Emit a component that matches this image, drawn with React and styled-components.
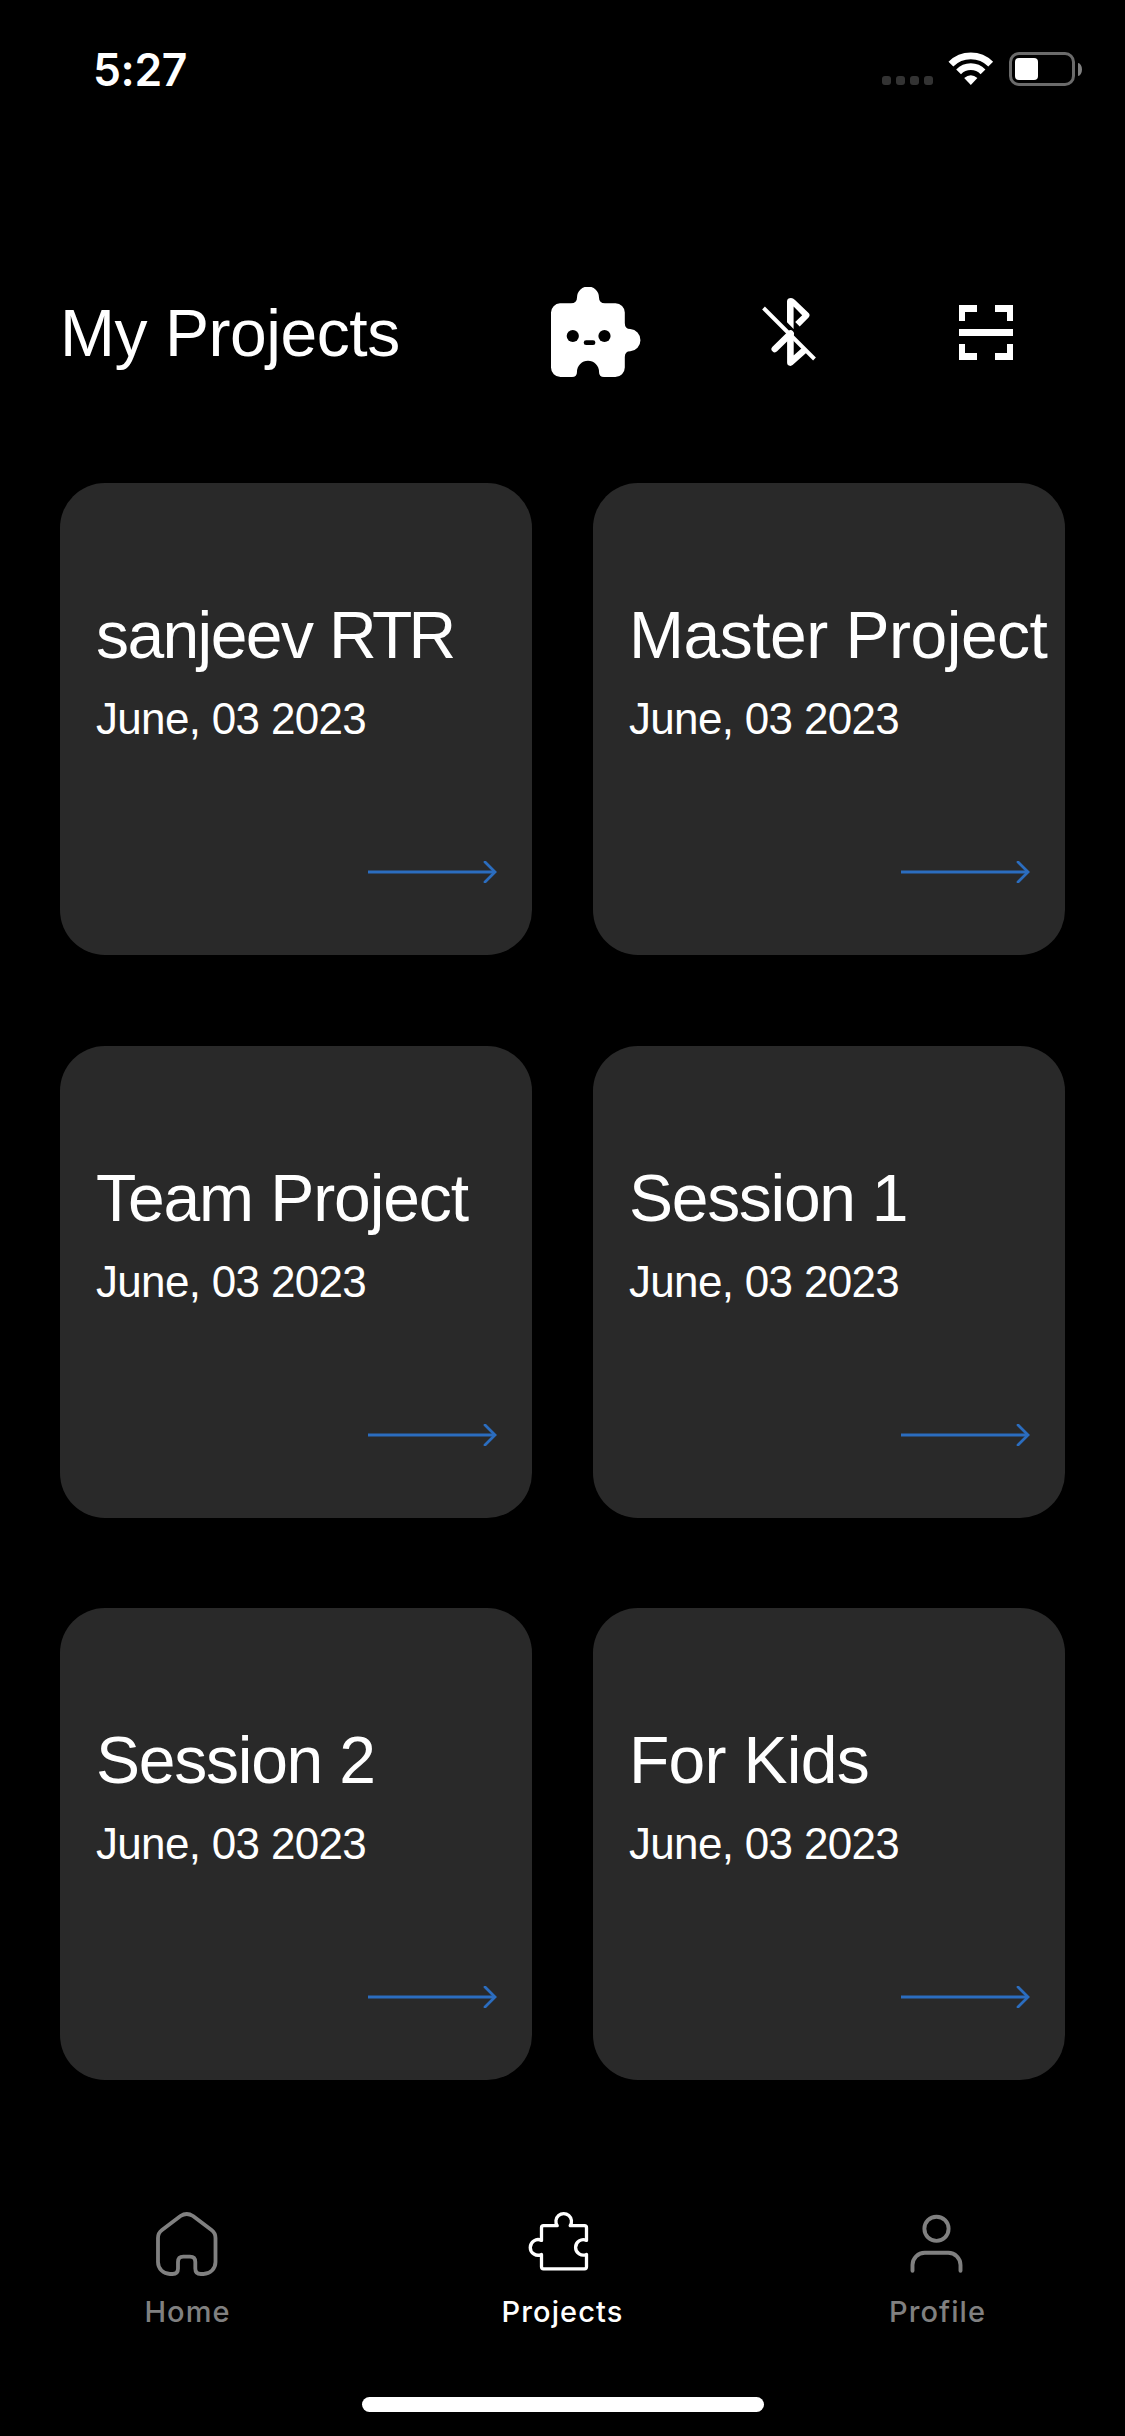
import React from "react";
import styled, { createGlobalStyle } from "styled-components";

const GlobalStyle = createGlobalStyle`
  * { box-sizing: border-box; }
  body {
    margin: 0;
    background: #000;
    color: #fff;
    font-family: "Liberation Sans", Arial, sans-serif;
  }
  svg { display: block; flex: none; }
`;

const Screen = styled.div`
  width: 1125px;
  height: 2436px;
  display: flex;
  flex-direction: column;
  background: #000;
  overflow: hidden;
`;

const StatusBar = styled.div`
  height: 138px;
  flex: none;
  display: flex;
  align-items: center;
  justify-content: space-between;
  padding: 0 43px 0 93px;
`;

const Clock = styled.div`
  font: 600 44.5px/54px Inter, sans-serif;
  letter-spacing: -0.4px;
  padding-top: 1px;
`;

const Indicators = styled.div`
  display: flex;
  align-items: flex-end;
  height: 34px;
`;

const SignalDots = styled.div`
  display: flex;
  gap: 5px;
  margin-right: 15px;
  padding-bottom: 1px;
`;

const SignalDot = styled.span`
  width: 9px;
  height: 9px;
  border-radius: 3px;
  background: #333;
`;

const Battery = styled.div`
  display: flex;
  align-items: center;
  gap: 3px;
  margin-left: 15px;
`;

const BatteryShell = styled.div`
  width: 66px;
  height: 34px;
  border: 3px solid #6b6b6b;
  border-radius: 10px;
  padding: 3px;
`;

const BatteryLevel = styled.div`
  width: 23px;
  height: 22px;
  border-radius: 4px;
  background: #fff;
`;

const BatteryCap = styled.div`
  width: 4px;
  height: 13px;
  border-radius: 0 4px 4px 0 / 0 6.5px 6.5px 0;
  background: #808080;
`;

const Header = styled.header`
  height: 268px;
  margin: 60px 0 17px;
  padding: 0 94px 0 60px;
  flex: none;
  display: flex;
  align-items: center;
  justify-content: space-between;
`;

const Heading = styled.h1`
  margin: 0;
  padding-top: 1px;
  font-weight: 400;
  font-size: 66px;
  line-height: 76px;
  white-space: nowrap;
  letter-spacing: ${(p) => p.$spacing}px;
`;

const Actions = styled.div`
  display: flex;
  gap: 105px;
`;

const IconButton = styled.button`
  width: 90px;
  height: 90px;
  padding: 0;
  border: 0;
  background: none;
  color: inherit;
`;

const Grid = styled.main`
  display: grid;
  grid-template-columns: 472px 472px;
  grid-auto-rows: 472px;
  gap: 90.5px 61px;
  padding: 0 60px;
  flex: none;
`;

const Card = styled.article`
  display: flex;
  flex-direction: column;
  border-radius: 45px;
  background: #292929;
  padding: 113px 0 72px 36px;
`;

const CardTitle = styled(Heading).attrs({ as: "h2" })``;

const Initials = styled.span`
  letter-spacing: -3.6px;
`;

const CardDate = styled.div`
  margin-top: 21px;
  font-size: 44px;
  line-height: 50px;
  letter-spacing: -0.68px;
  white-space: nowrap;
`;

const CardFooter = styled.div`
  display: flex;
  justify-content: flex-end;
  margin-top: auto;
  padding-right: 35px;
`;

const TabBar = styled.nav`
  display: grid;
  grid-template-columns: repeat(3, 1fr);
  margin-top: auto;
  padding-bottom: 67px;
`;

const Tab = styled.a`
  display: flex;
  flex-direction: column;
  align-items: center;
  gap: 14px;
  padding-right: 1px;
  color: ${(p) => (p.$active ? "#fff" : "#808080")};
`;

const TabLabel = styled.span`
  font: 450 29px/36px Inter, sans-serif;
  letter-spacing: ${(p) => p.$spacing}px;
  margin-right: -${(p) => p.$spacing}px;
`;

const HomeIndicator = styled.div`
  width: 402px;
  height: 15px;
  margin: 0 0 24px 362px;
  border-radius: 8px;
  background: #fff;
  flex: none;
`;

const WifiIcon = () => (
  <svg width="46" height="34" viewBox="0 0 46 34" fill="none" stroke="#fff">
    <path d="M2.9 12.1A28.2 28.2 0 0 1 42.7 12.1" strokeWidth="6.8" />
    <path d="M10.6 19.8A17.2 17.2 0 0 1 35 19.8" strokeWidth="6.8" />
    <path d="M16.2 26.1Q22.8 20.2 29.4 26.1L22.8 33Z" fill="#fff" stroke="none" />
  </svg>
);

const PuzzleFaceIcon = () => (
  <svg width="90" height="90" viewBox="0 0 90 90" fill="#fff">
    <path d="M9 16.3H20Q26 16.3 26 10.5A11 11 0 0 1 48 10.5Q48 16.3 54 16.3H64.5A9.3 9.3 0 0 1 73.8 25.6V36Q73.8 42 79.3 42A11.2 11.2 0 0 1 79.3 64.3Q73.8 64.3 73.8 70V80.5A9.5 9.5 0 0 1 64.3 90H53Q48 90 48 84.7A11 11 0 0 0 26 84.7Q26 90 21 90H9.5A9.5 9.5 0 0 1 0 80.5V25.6A9.3 9.3 0 0 1 9 16.3Z" />
    <g fill="#000">
      <circle cx="21.8" cy="49" r="6.1" />
      <circle cx="53.5" cy="49" r="6.1" />
      <rect x="32.7" y="53.3" width="11.7" height="4.8" rx="2.4" />
    </g>
  </svg>
);

const BluetoothOffIcon = () => (
  <svg width="90" height="90" viewBox="0 0 90 90" fill="none" stroke="#fff" strokeWidth="6.6" strokeLinejoin="round">
    <path d="M17.5 21L68.5 72" strokeWidth="3.9" />
    <path d="M41 35.3V14.2Q41.3 11 45 11Q47 11 49 13L62.6 26Q64.6 28.2 62.6 30.5L53.7 39.6L49.2 35L56.2 28.2L47.6 19.5V42Z" fill="#fff" stroke="none" />
    <path d="M28.8 62L44.6 46.5" strokeLinecap="round" />
    <path d="M44.4 46V75.6L59.3 62.4" />
  </svg>
);

const ScanIcon = () => (
  <svg width="90" height="90" viewBox="0 0 90 90" fill="#fff">
    <path d="M18 18H36V25H24V34H18ZM54 18H72V34H66V25H54ZM18 42H72V49H18ZM18 57H24V66H36V73H18ZM66 57H72V73H54V66H66Z" />
  </svg>
);

const ArrowIcon = () => (
  <svg width="129" height="22" viewBox="0 0 129 22" fill="none" stroke="#2b6dbf">
    <path d="M0 11H127" strokeWidth="3.2" />
    <path d="M117 1L127 11L117 21" strokeWidth="2.8" strokeLinecap="round" />
  </svg>
);

const TabIcon = ({ children, weight }) => (
  <svg width="72" height="72" viewBox="0 0 72 72" fill="none" stroke="currentColor" strokeWidth={weight} strokeLinecap="round" strokeLinejoin="round">
    {children}
  </svg>
);

const HomeIcon = () => (
  <TabIcon weight={3.8}>
    <path d="M11 22L29.5 8Q35.7 4 42 8L60.5 22Q64.5 25 64.5 30V54A12 12 0 0 1 52.5 66H49.8Q44.3 66 44.3 60.5V54Q44.3 48.7 39 48.7H32.3Q27 48.7 27 54V60.5Q27 66 21.5 66H19A12 12 0 0 1 7 54V30Q7 25 11 22Z" />
  </TabIcon>
);

const PuzzleIcon = () => (
  <TabIcon weight={3.3}>
    <path d="M17.5 17.7H31.2V17.7A7.8 7.8 0 1 1 44.2 17.7H58.5Q60.5 17.7 60.5 19.7V32.4A7.7 7.7 0 1 0 60.5 46.4V58.8Q60.5 60.8 58.5 60.8H17.5Q15.5 60.8 15.5 58.8V46.4A7.8 7.8 0 1 1 15.5 32.4V19.7Q15.5 17.7 17.5 17.7Z" />
  </TabIcon>
);

const ProfileIcon = () => (
  <TabIcon weight={3.9}>
    <circle cx="35.5" cy="20.8" r="12.1" />
    <path d="M11.5 62.7V57A12.3 12.3 0 0 1 23.8 44.7H47.2A12.3 12.3 0 0 1 59.5 57V62.7" />
  </TabIcon>
);

const projects = [
  { title: "sanjeev ", initials: "RTR", spacing: -1.6 },
  { title: "Master Project", spacing: -0.5 },
  { title: "Team Project", spacing: -1.1 },
  { title: "Session 1", spacing: -1.3 },
  { title: "Session 2", spacing: -1.25 },
  { title: "For Kids", spacing: -0.7 },
];

const tabs = [
  { label: "Home", Icon: HomeIcon, spacing: 1.1 },
  { label: "Projects", Icon: PuzzleIcon, active: true, spacing: 1.1 },
  { label: "Profile", Icon: ProfileIcon, spacing: 1.1 },
];

export default function App() {
  return (
    <Screen>
      <GlobalStyle />
      <StatusBar>
        <Clock>5:27</Clock>
        <Indicators>
          <SignalDots>
            {[0, 1, 2, 3].map((n) => (
              <SignalDot key={n} />
            ))}
          </SignalDots>
          <WifiIcon />
          <Battery>
            <BatteryShell>
              <BatteryLevel />
            </BatteryShell>
            <BatteryCap />
          </Battery>
        </Indicators>
      </StatusBar>
      <Header>
        <Heading $spacing={-0.45}>My Projects</Heading>
        <Actions>
          <IconButton aria-label="Assistant"><PuzzleFaceIcon /></IconButton>
          <IconButton aria-label="Bluetooth"><BluetoothOffIcon /></IconButton>
          <IconButton aria-label="Scan"><ScanIcon /></IconButton>
        </Actions>
      </Header>
      <Grid>
        {projects.map(({ title, initials, spacing }) => (
          <Card key={title}>
            <CardTitle $spacing={spacing}>
              {title}
              {initials && <Initials>{initials}</Initials>}
            </CardTitle>
            <CardDate>June, 03 2023</CardDate>
            <CardFooter>
              <ArrowIcon />
            </CardFooter>
          </Card>
        ))}
      </Grid>
      <TabBar>
        {tabs.map(({ label, Icon, active, spacing }) => (
          <Tab key={label} $active={active}>
            <Icon />
            <TabLabel $spacing={spacing}>{label}</TabLabel>
          </Tab>
        ))}
      </TabBar>
      <HomeIndicator />
    </Screen>
  );
}
